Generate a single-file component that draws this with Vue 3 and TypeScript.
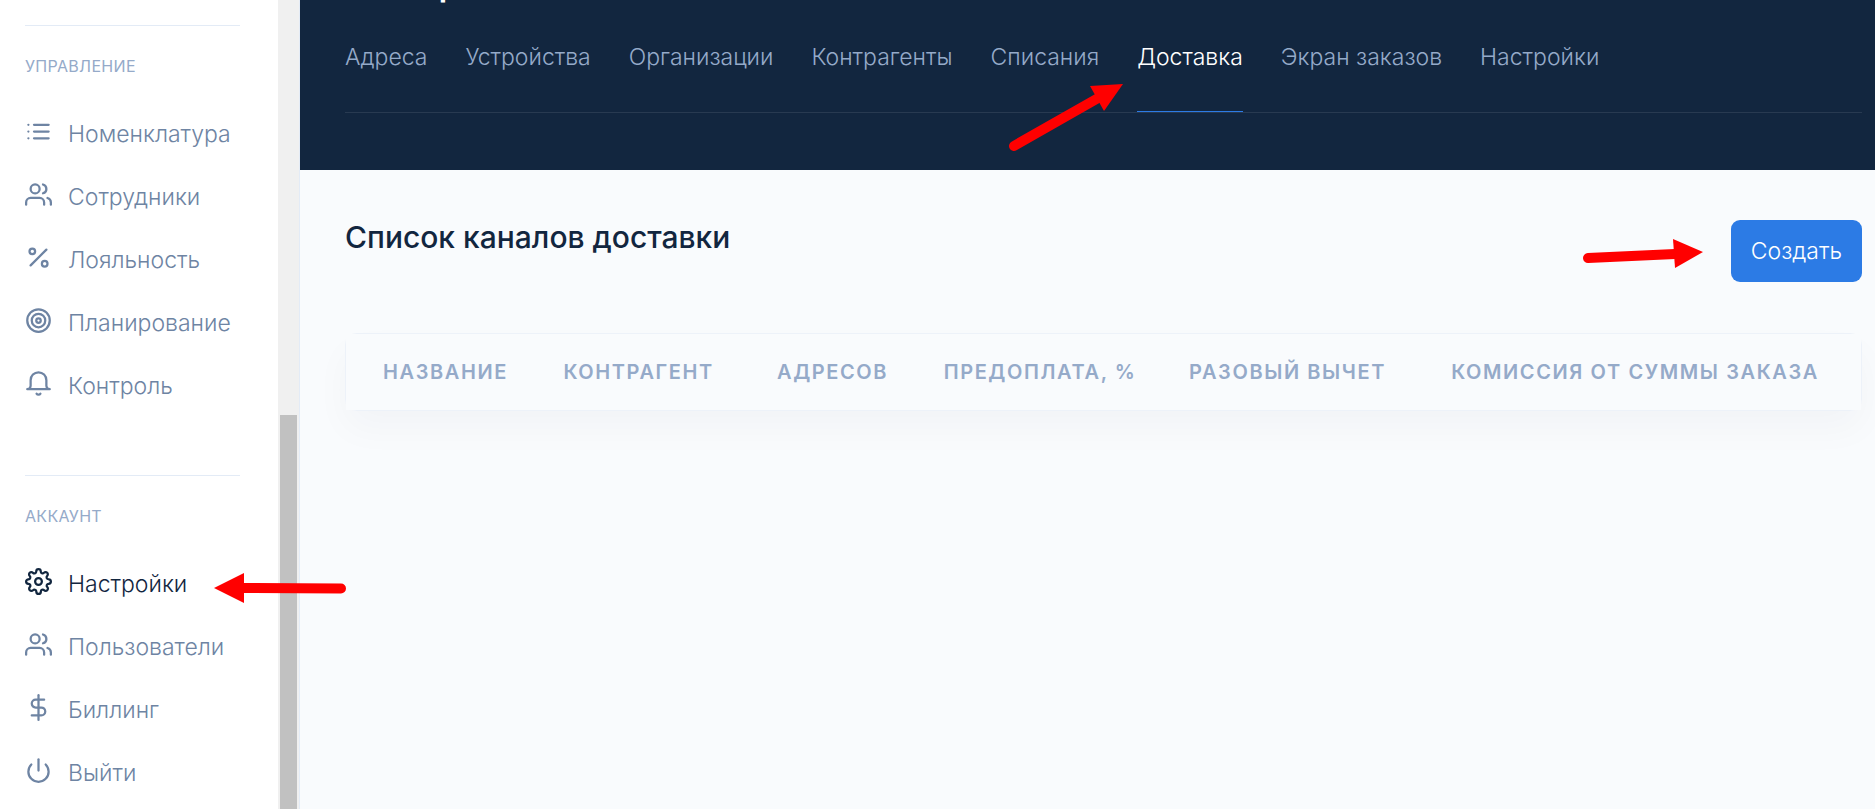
<script setup lang="ts">
type IconName = 'list' | 'users' | 'percent' | 'target' | 'bell' | 'settings' | 'dollar' | 'power'

interface NavItem {
  label: string
  icon: IconName
  active?: boolean
}

interface NavGroup {
  title: string
  items: NavItem[]
}

const icons: Record<IconName, string[]> = {
  list: ['M8 6h13', 'M8 12h13', 'M8 18h13', 'M3 6h.01', 'M3 12h.01', 'M3 18h.01'],
  users: [
    'M17 21v-2a4 4 0 0 0-4-4H5a4 4 0 0 0-4 4v2',
    'M13 7a4 4 0 1 1-8 0 4 4 0 0 1 8 0z',
    'M23 21v-2a4 4 0 0 0-3-3.87',
    'M16 3.13a4 4 0 0 1 0 7.75',
  ],
  percent: [
    'M19 5L5 19',
    'M9 6.5a2.5 2.5 0 1 1-5 0 2.5 2.5 0 0 1 5 0z',
    'M20 17.5a2.5 2.5 0 1 1-5 0 2.5 2.5 0 0 1 5 0z',
  ],
  target: [
    'M22 12a10 10 0 1 1-20 0 10 10 0 0 1 20 0z',
    'M18 12a6 6 0 1 1-12 0 6 6 0 0 1 12 0z',
    'M14 12a2 2 0 1 1-4 0 2 2 0 0 1 4 0z',
  ],
  bell: ['M22 17H2a3 3 0 0 0 3-3V9a7 7 0 0 1 14 0v5a3 3 0 0 0 3 3z', 'M13.73 21a2 2 0 0 1-3.46 0'],
  settings: [
    'M15 12a3 3 0 1 1-6 0 3 3 0 0 1 6 0z',
    'M19.4 15a1.65 1.65 0 0 0 .33 1.82l.06.06a2 2 0 0 1 0 2.83 2 2 0 0 1-2.83 0l-.06-.06a1.65 1.65 0 0 0-1.82-.33 1.65 1.65 0 0 0-1 1.51V21a2 2 0 0 1-2 2 2 2 0 0 1-2-2v-.09A1.65 1.65 0 0 0 9 19.4a1.65 1.65 0 0 0-1.82.33l-.06.06a2 2 0 0 1-2.83 0 2 2 0 0 1 0-2.83l.06-.06a1.65 1.65 0 0 0 .33-1.82 1.65 1.65 0 0 0-1.51-1H3a2 2 0 0 1-2-2 2 2 0 0 1 2-2h.09A1.65 1.65 0 0 0 4.6 9a1.65 1.65 0 0 0-.33-1.82l-.06-.06a2 2 0 0 1 0-2.83 2 2 0 0 1 2.83 0l.06.06a1.65 1.65 0 0 0 1.82.33H9a1.65 1.65 0 0 0 1-1.51V3a2 2 0 0 1 2-2 2 2 0 0 1 2 2v.09a1.65 1.65 0 0 0 1 1.51 1.65 1.65 0 0 0 1.82-.33l.06-.06a2 2 0 0 1 2.83 0 2 2 0 0 1 0 2.83l-.06.06a1.65 1.65 0 0 0-.33 1.82V9a1.65 1.65 0 0 0 1.51 1H21a2 2 0 0 1 2 2 2 2 0 0 1-2 2h-.09a1.65 1.65 0 0 0-1.51 1z',
  ],
  dollar: ['M12 1v22', 'M17 5H9.5a3.5 3.5 0 0 0 0 7h5a3.5 3.5 0 0 1 0 7H6'],
  power: ['M18.36 6.64a9 9 0 1 1-12.73 0', 'M12 2v10'],
}

const groups: NavGroup[] = [
  {
    title: 'Управление',
    items: [
      { label: 'Номенклатура', icon: 'list' },
      { label: 'Сотрудники', icon: 'users' },
      { label: 'Лояльность', icon: 'percent' },
      { label: 'Планирование', icon: 'target' },
      { label: 'Контроль', icon: 'bell' },
    ],
  },
  {
    title: 'Аккаунт',
    items: [
      { label: 'Настройки', icon: 'settings', active: true },
      { label: 'Пользователи', icon: 'users' },
      { label: 'Биллинг', icon: 'dollar' },
      { label: 'Выйти', icon: 'power' },
    ],
  },
]

const tabs = ['Адреса', 'Устройства', 'Организации', 'Контрагенты', 'Списания', 'Доставка', 'Экран заказов', 'Настройки']
const activeTab = 'Доставка'

const columns = [
  { key: 'name', label: 'Название' },
  { key: 'agent', label: 'Контрагент' },
  { key: 'addresses', label: 'Адресов' },
  { key: 'prepay', label: 'Предоплата, %' },
  { key: 'fixed', label: 'Разовый вычет' },
  { key: 'fee', label: 'Комиссия от суммы заказа' },
]
</script>

<template>
  <div class="app">
    <aside class="sidebar">
      <nav class="menu">
        <section v-for="group in groups" :key="group.title" class="group">
          <h6 class="group-title">{{ group.title }}</h6>
          <ul class="list">
            <li v-for="item in group.items" :key="item.label" class="item">
              <a href="#" class="link" :class="{ active: item.active }">
                <svg class="icon" viewBox="0 0 24 24" aria-hidden="true">
                  <path v-for="d in icons[item.icon]" :key="d" :d="d" />
                </svg>
                <span>{{ item.label }}</span>
              </a>
              <svg v-if="item.active" class="arrow arrow-menu" viewBox="0 0 134 30" aria-hidden="true">
                <path class="shaft" d="M28 15L127 15.5" />
                <path class="head" d="M0 15L30 0V30z" />
              </svg>
            </li>
          </ul>
        </section>
      </nav>
      <div class="track"><div class="thumb"></div></div>
    </aside>

    <main class="main">
      <header class="header">
        <h1 class="title">Настройки</h1>
        <nav class="tabs">
          <div v-for="tab in tabs" :key="tab" class="tab-cell">
            <a href="#" class="tab" :class="{ active: tab === activeTab }">{{ tab }}</a>
            <svg v-if="tab === activeTab" class="arrow arrow-tab" viewBox="0 0 116 70" aria-hidden="true">
              <path class="shaft" d="M7 63L93 14" />
              <path class="head" d="M116 1L83 3L97 28z" />
            </svg>
          </div>
        </nav>
      </header>

      <section class="content">
        <div class="bar">
          <h2 class="subtitle">Список каналов доставки</h2>
          <div class="action">
            <button type="button" class="create">Создать</button>
            <svg class="arrow arrow-create" viewBox="0 0 122 30" aria-hidden="true">
              <path class="shaft" d="M6 19L93 15" />
              <path class="head" d="M121 13L91 0L93 29z" />
            </svg>
          </div>
        </div>
        <div class="card">
          <table class="table">
            <colgroup>
              <col v-for="col in columns" :key="col.key" :class="`col-${col.key}`" />
            </colgroup>
            <thead>
              <tr>
                <th v-for="col in columns" :key="col.key" scope="col">{{ col.label }}</th>
              </tr>
            </thead>
          </table>
        </div>
      </section>
    </main>
  </div>
</template>

<style>
body {
  margin: 0;
  background: #f9fbfd;
}
</style>

<style scoped>
.app {
  display: flex;
  height: 100vh;
  overflow: hidden;
  font-family: Inter, "Liberation Sans", sans-serif;
  font-size: 23px;
  font-weight: 300;
  color: #12263f;
}

.sidebar {
  flex: 0 0 300px;
  box-sizing: border-box;
  display: flex;
  position: relative;
  z-index: 1;
  background: #fff;
  border-right: 1px solid #e3ebf6;
}

.menu {
  flex: 1;
  padding: 25px 38px 0 25px;
}

.group {
  border-top: 1px solid #e3ebf6;
  padding-top: 28px;
}

.group + .group {
  margin-top: 58px;
}

.group-title {
  margin: 0 0 24px;
  font-size: 16px;
  line-height: 24px;
  font-weight: 400;
  letter-spacing: 0.02em;
  text-transform: uppercase;
  color: #95aac9;
}

.list {
  margin: 0;
  padding: 0;
  list-style: none;
}

.item {
  position: relative;
}

.link {
  display: flex;
  align-items: center;
  gap: 16px;
  height: 63px;
  white-space: nowrap;
  text-decoration: none;
  color: #6e84a3;
}

.link.active {
  color: #12263f;
}

.icon {
  flex: none;
  width: 27px;
  height: 27px;
  margin-bottom: 4px;
  fill: none;
  stroke: currentColor;
  stroke-width: 2;
  stroke-linecap: round;
  stroke-linejoin: round;
}

.track {
  flex: 0 0 21px;
  display: flex;
  flex-direction: column;
  justify-content: flex-end;
  align-items: center;
  background: #f0f0f0;
}

.thumb {
  width: 17px;
  height: 48.7%;
  background: #c1c1c1;
}

.main {
  flex: 1;
  min-width: 0;
}

.header {
  height: 170px;
  box-sizing: border-box;
  padding: 0 13px 0 45px;
  overflow: hidden;
  background: #12263f;
}

.title {
  margin: -43px 0 0;
  font-size: 39px;
  line-height: 48px;
  font-weight: 500;
  color: #fff;
}

.tabs {
  display: flex;
  gap: 38px;
  border-bottom: 1px solid #283a51;
}

.tab-cell {
  position: relative;
}

.tab {
  display: block;
  padding: 35px 0 37px;
  border-bottom: 1px solid transparent;
  line-height: 34px;
  white-space: nowrap;
  text-decoration: none;
  color: #95aac9;
}

.tab.active {
  border-color: #2c7be5;
  color: #fff;
}

.content {
  padding: 50px 13px 0 45px;
}

.bar {
  display: flex;
  justify-content: space-between;
  align-items: flex-start;
  margin-bottom: 51px;
}

.subtitle {
  margin: 0;
  font-size: 30px;
  line-height: 34px;
  font-weight: 500;
}

.action {
  position: relative;
}

.create {
  display: block;
  height: 62px;
  padding: 0 20px;
  border: 0;
  border-radius: 9px;
  background: #2c7be5;
  color: #fff;
  font: inherit;
}

.card {
  border: 1px solid #edf2f9;
  border-radius: 12px;
  box-shadow: 0 18px 36px rgba(18, 38, 63, 0.03);
}

.table {
  width: 100%;
  border-collapse: collapse;
}

.table th {
  height: 76px;
  padding: 0 0 0 28px;
  background: #f9fbfd;
  font-size: 20px;
  line-height: 30px;
  font-weight: 600;
  letter-spacing: 0.08em;
  text-align: left;
  text-transform: uppercase;
  white-space: nowrap;
  color: #95aac9;
}

.table th:first-child {
  padding-left: 37px;
}

.col-name {
  width: 12.5%;
}

.col-agent {
  width: 14.1%;
}

.col-addresses {
  width: 11%;
}

.col-prepay {
  width: 16.2%;
}

.col-fixed {
  width: 17.3%;
}

.col-fee {
  width: 28.9%;
}

.arrow {
  position: absolute;
  pointer-events: none;
}

.shaft {
  fill: none;
  stroke: #f00;
  stroke-width: 10;
  stroke-linecap: round;
}

.head {
  fill: #f00;
}

.arrow-menu {
  left: 189px;
  top: 21px;
  width: 134px;
  height: 30px;
}

.arrow-tab {
  right: 120px;
  top: 78px;
  width: 116px;
  height: 70px;
}

.arrow-create {
  right: 158px;
  top: 19px;
  width: 122px;
  height: 30px;
}
</style>
